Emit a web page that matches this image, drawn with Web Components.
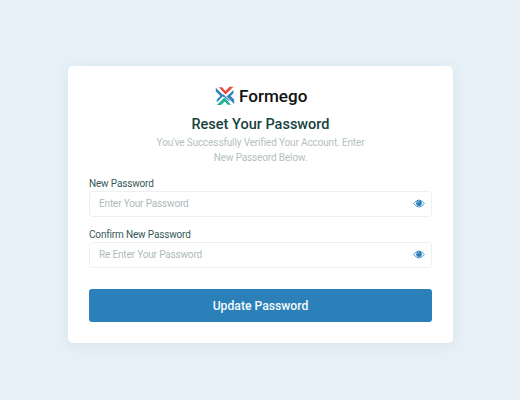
<!DOCTYPE html>
<html lang="en">
<head>
<meta charset="utf-8">
<title>Reset Your Password</title>
<style>
body{margin:0;background:#e7f0f7;font-family:Roboto,"Liberation Sans",sans-serif;color:#184240}
</style>
</head>
<body>
<reset-page></reset-page>
<script>
class BrandLogo extends HTMLElement{
  constructor(){super();this.attachShadow({mode:'open'}).innerHTML=`
<style>
:host{display:flex;justify-content:center;align-items:center;gap:4px;height:20px;padding-left:1.4px;color:#111;font-size:17.1px;font-weight:500;line-height:20px;white-space:nowrap}
svg{width:20px;height:20px;flex:none}
</style>
<svg viewBox="0 0 20 20">
<path fill="#3585bd" d="M.8 1.800L8.500 9.500 7.500 10.800 1.800 16.500V13.500L5.300 10 .8 5.500Z"/>
<path fill="#3585bd" d="M18.500 4V7.300L15.700 10 19.200 13.500V18L11.500 10.500Z"/>
<path fill="#3585bd" d="M7.500 8L9.300 9 14.500 14.500 14 15.200 9.500 11 8 11Z"/>
<path fill="#e74c3c" d="M3.800 1.200H7L10.500 4.900 14.500 .8H18.500L10.500 8.500Z"/>
<path fill="#1bb394" d="M1.800 19L9.500 11.600 16 18.800H12.800L9.500 15.400 6 19Z"/>
</svg><span><slot></slot></span>`}
}
class PasswordField extends HTMLElement{
  constructor(){super();this.attachShadow({mode:'open'}).innerHTML=`
<style>
:host{display:block;font-size:10px;letter-spacing:-.16px}
label{display:block;line-height:14px;color:#365957;white-space:nowrap}
.box{box-sizing:border-box;height:26px;border:1px solid #edf0f1;border-radius:3.5px;display:flex;align-items:center;justify-content:space-between;padding:0 6px 1px 9px;color:#aebbba;white-space:nowrap}
svg{width:12px;height:9px;display:block}
</style>
<label><slot></slot></label>
<div class="box"><span><slot name="hint"></slot></span>
<svg viewBox="0 0 24 18"><path d="M1.500 9Q12-5 22.500 9Q12 23 1.500 9Z" fill="#fff" stroke="#4590c4" stroke-width="2"/><circle cx="12" cy="8.500" r="5.600" fill="#2b7fb9"/><path d="M9 8q0-3 3-3" stroke="#d5e8f5" stroke-width="1.200" fill="none"/></svg>
</div>`}
}
class PrimaryButton extends HTMLElement{
  constructor(){super();this.attachShadow({mode:'open'}).innerHTML=`
<style>
:host{display:block}
button{display:block;width:100%;height:33px;padding:0;border:0;border-radius:3px;background:#2b80b9;color:#f5fafd;font:500 12.2px Roboto,"Liberation Sans",sans-serif}
</style><button><slot></slot></button>`}
}
class ResetPage extends HTMLElement{
  constructor(){super();this.attachShadow({mode:'open'}).innerHTML=`
<style>
:host{display:flex;height:400px;align-items:flex-start;padding:65.5px 0 0 68px;box-sizing:border-box}
main{box-sizing:border-box;width:385.4px;height:277.5px;background:#fff;border-radius:5px;padding:20.5px 21.4px 0 21px;box-shadow:0 2px 14px rgba(40,90,110,.08)}
h1{margin:9px 0 0;font-size:14.5px;font-weight:500;line-height:20px;text-align:center;white-space:nowrap}
p{margin:1px 0 0;font-size:10px;letter-spacing:-.14px;line-height:14.5px;text-align:center;color:#b5c0bf;white-space:nowrap}
password-field.first{margin-top:12px}
password-field.second{margin-top:11px}
primary-button{margin-top:21px}
</style>
<main>
<brand-logo>Formego</brand-logo>
<h1>Reset Your Password</h1>
<p>You've Successfully Verified Your Account. Enter<br>New Passeord Below.</p>
<password-field class="first">New Password<span slot="hint">Enter Your Password</span></password-field>
<password-field class="second">Confirm New Password<span slot="hint">Re Enter Your Password</span></password-field>
<primary-button>Update Password</primary-button>
</main>`}
}
customElements.define('brand-logo',BrandLogo);
customElements.define('password-field',PasswordField);
customElements.define('primary-button',PrimaryButton);
customElements.define('reset-page',ResetPage);
</script>
</body>
</html>
